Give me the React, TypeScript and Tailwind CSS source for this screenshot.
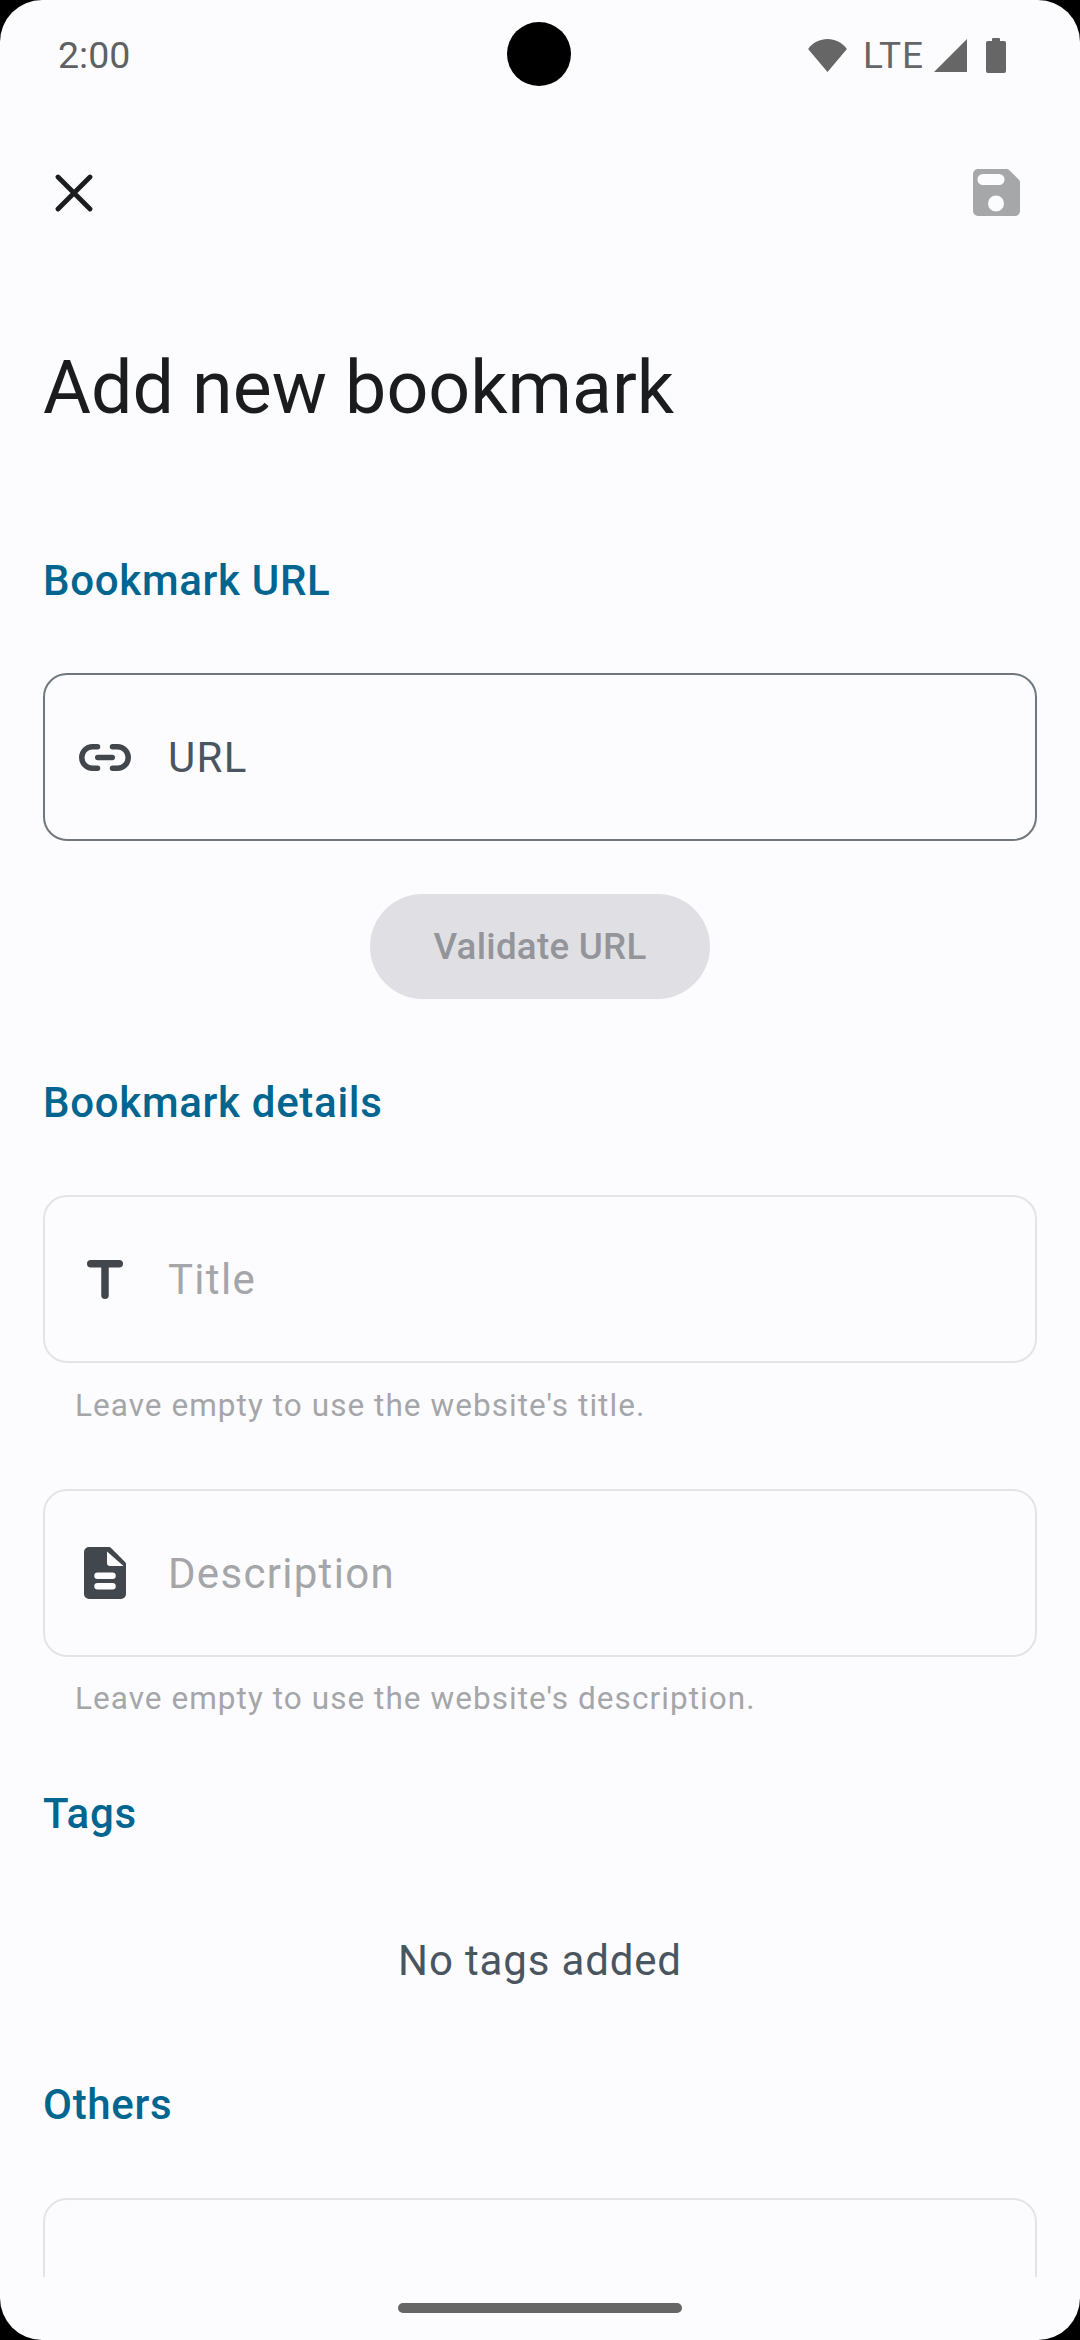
import type { ReactNode } from 'react'

const FONT = "font-['Roboto',sans-serif]"

function CloseIcon() {
  return (
    <svg width="38" height="38" viewBox="0 0 38 38" fill="none" stroke="#1a1c1e" strokeWidth="4.800" strokeLinecap="round">
      <path d="M3 3 35 35M35 3 3 35" />
    </svg>
  )
}

function SaveIcon() {
  return (
    <svg className="mb-[2px]" width="47" height="47" viewBox="0 0 47 47">
      <path
        fill="#a6a7a9"
        fillRule="evenodd"
        d="M5 0h29a3 3 0 0 1 2.100.9l10 10a3 3 0 0 1 .9 2.100V42a5 5 0 0 1-5 5H5a5 5 0 0 1-5-5V5a5 5 0 0 1 5-5zM10 5a5.500 5.500 0 0 0 0 11h16a5.500 5.500 0 0 0 0-11zM23 26.500a8 8 0 1 0 0 16 8 8 0 0 0 0-16z"
      />
    </svg>
  )
}

function LinkIcon() {
  return (
    <svg width="52" height="27" viewBox="0 0 52 27" fill="none" stroke="#41474d" strokeWidth="5.500" strokeLinecap="round">
      <path d="M18.500 2.750H13.500a10.750 10.750 0 0 0 0 21.500h5M33.500 2.750h5a10.750 10.750 0 0 1 0 21.500h-5M18.750 13.500h14.500" />
    </svg>
  )
}

function TitleIcon() {
  return (
    <svg width="36" height="39" viewBox="0 0 36 39" fill="none" stroke="#41474d" strokeWidth="7.500" strokeLinecap="round">
      <path d="M3.750 3.750h28.500M18 3.750v31.500" />
    </svg>
  )
}

function DocIcon() {
  return (
    <svg width="42" height="52" viewBox="0 0 42 52">
      <path
        fill="#41474d"
        fillRule="evenodd"
        d="M5 0h20a2.500 2.500 0 0 1 1.800.7l14.500 14.500a2.500 2.500 0 0 1 .7 1.800V47a5 5 0 0 1-5 5H5a5 5 0 0 1-5-5V5a5 5 0 0 1 5-5zM23 4.500V16a3 3 0 0 0 3 3h13.500zM13.500 25.500a3.250 3.250 0 0 0 0 6.500h15a3.250 3.250 0 0 0 0-6.500zM13.500 36a3.250 3.250 0 0 0 0 6.500h15a3.250 3.250 0 0 0 0-6.500z"
      />
    </svg>
  )
}

function StatusIcons() {
  return (
    <div className="flex items-center">
      <svg width="39" height="33" viewBox="0 0 39 33">
        <path fill="#666" d="M19.500 33 .5 10.500Q0 10 .5 9.500C5 3.500 12 0 19.500 0s14.500 3.500 19 9.500q.5.500 0 1z" />
      </svg>
      <span className="ml-[16px] text-[37px] leading-none tracking-[1px] text-[#666]">LTE</span>
      <svg className="ml-[10px]" width="33" height="33" viewBox="0 0 33 33">
        <path fill="#666" d="M33 0v33H0z" />
      </svg>
      <svg className="ml-[19px]" width="20" height="35" viewBox="0 0 20 35">
        <path fill="#666" d="M6 1a1 1 0 0 1 1-1h6a1 1 0 0 1 1 1v2h4a2 2 0 0 1 2 2v28a2 2 0 0 1-2 2H2a2 2 0 0 1-2-2V5a2 2 0 0 1 2-2h4z" />
      </svg>
    </div>
  )
}

function SectionLabel({ children, className }: { children: ReactNode; className: string }) {
  return (
    <div className={`h-[50px] pl-[43px] text-[42px] leading-[50px] font-medium tracking-[0.7px] text-[#00658f] ${className}`}>
      {children}
    </div>
  )
}

function Field({ icon, label, active }: { icon: ReactNode; label: string; active?: boolean }) {
  return (
    <div
      className={`mx-[43px] flex h-[168px] items-center rounded-[24px] ${
        active ? 'border-[2.5px] border-[#71777c]' : 'border-[2.75px] border-[#e3e4e6]'
      }`}
    >
      <div className="flex w-[123px] shrink-0 justify-center pr-[4px]">{icon}</div>
      <span className={`text-[42px] tracking-[1.3px] ${active ? 'text-[#4a5560]' : 'text-[#a5a6a9]'}`}>{label}</span>
    </div>
  )
}

function Helper({ children, className }: { children: ReactNode; className: string }) {
  return (
    <div className={`h-[40px] pl-[75px] text-[31.5px] leading-[40px] tracking-[1.05px] text-[#a5a6a9] ${className}`}>
      {children}
    </div>
  )
}

export default function App() {
  return (
    <div className={`h-[2340px] w-[1080px] bg-black ${FONT}`}>
      <div className="relative flex h-full flex-col overflow-hidden rounded-[42px] bg-[#fcfcff]">
        {/* Status bar */}
        <div className="flex h-[110px] shrink-0 items-start justify-between pt-[37px] pl-[58px] pr-[74px]">
          <span className="text-[37.5px] leading-[37px] text-[#5f6163]">2:00</span>
          <StatusIcons />
        </div>
        <div className="absolute top-[22px] left-[507px] h-[64px] w-[64px] rounded-full bg-black" />

        {/* App bar */}
        <div className="flex h-[166px] shrink-0 items-center justify-between pl-[55px] pr-[60px]">
          <CloseIcon />
          <SaveIcon />
        </div>

        {/* Form, cut off above the gesture bar */}
        <div className="h-[2001px] shrink-0 overflow-hidden">
          <div className="mt-[70px] h-[84px] pl-[43px] text-[73.5px] leading-[84px] text-[#1a1c1e]">Add new bookmark</div>

          <SectionLabel className="mt-[126px]">Bookmark URL</SectionLabel>
          <div className="mt-[67px]">
            <Field active icon={<LinkIcon />} label="URL" />
          </div>
          <div className="mt-[53px] flex justify-center">
            <div className="flex h-[105px] w-[340px] items-center justify-center rounded-full bg-[#e0e0e4] text-[36.75px] tracking-[0.26px] font-medium text-[#94959a]">
              Validate URL
            </div>
          </div>

          <SectionLabel className="mt-[79px]">Bookmark details</SectionLabel>
          <div className="mt-[67px]">
            <Field icon={<TitleIcon />} label="Title" />
          </div>
          <Helper className="mt-[23px]">Leave empty to use the website's title.</Helper>
          <div className="mt-[63px]">
            <Field icon={<DocIcon />} label="Description" />
          </div>
          <Helper className="mt-[22px]">Leave empty to use the website's description.</Helper>

          <SectionLabel className="mt-[70px]">Tags</SectionLabel>
          <div className="mt-[97px] h-[50px] text-center text-[42px] leading-[50px] tracking-[0.85px] text-[#4a5560]">No tags added</div>

          <SectionLabel className="mt-[94px]">Others</SectionLabel>
          <div className="mx-[43px] mt-[68px] h-[168px] rounded-[24px] border-[2.75px] border-[#e3e4e6]" />
        </div>

        {/* Gesture bar */}
        <div className="flex flex-1 justify-center pt-[26px]">
          <div className="h-[10px] w-[284px] rounded-full bg-[#666]" />
        </div>
      </div>
    </div>
  )
}
